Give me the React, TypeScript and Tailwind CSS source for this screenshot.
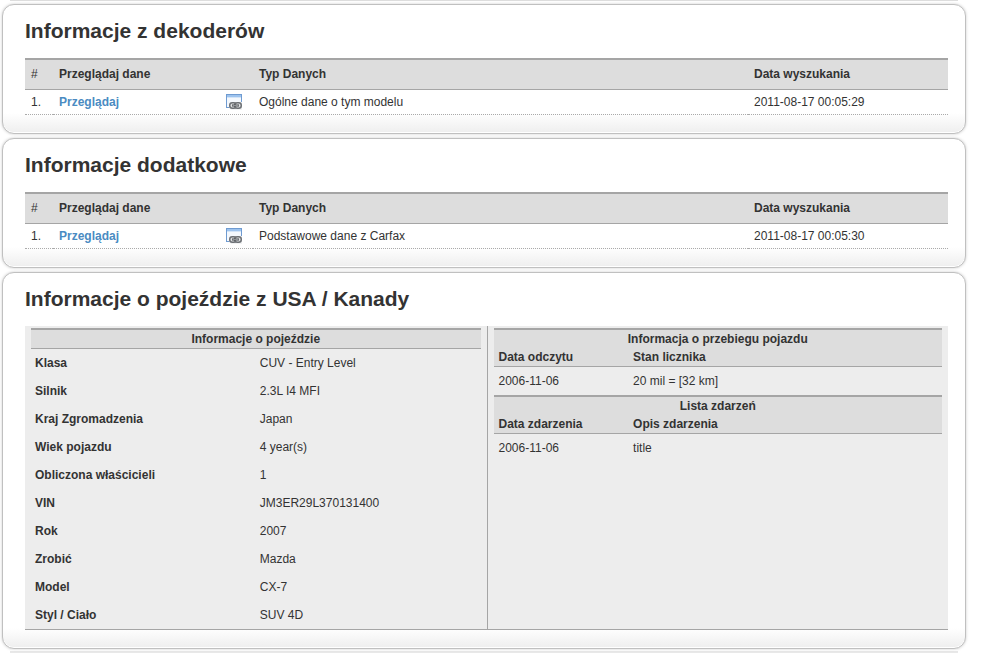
import type { ReactNode } from "react";

const decoderRows = [
  { type: "Ogólne dane o tym modelu", date: "2011-08-17 00:05:29" },
];

const extraRows = [
  { type: "Podstawowe dane z Carfax", date: "2011-08-17 00:05:30" },
];

const vehicle = [
  ["Klasa", "CUV - Entry Level"],
  ["Silnik", "2.3L I4 MFI"],
  ["Kraj Zgromadzenia", "Japan"],
  ["Wiek pojazdu", "4 year(s)"],
  ["Obliczona właścicieli", "1"],
  ["VIN", "JM3ER29L370131400"],
  ["Rok", "2007"],
  ["Zrobić", "Mazda"],
  ["Model", "CX-7"],
  ["Styl / Ciało", "SUV 4D"],
];

function WindowLinkIcon() {
  return (
    <svg width="16" height="16" viewBox="0 0 16 16" fill="none" aria-hidden="true">
      <rect x="0.5" y="0.5" width="15" height="13" fill="#f4f8fd" stroke="#6f9bd1" />
      <path d="M1 1h14v2H1z" fill="#9dc3ee" />
      <path d="M1 3.5h14" stroke="#d3e4f7" />
      <path d="M5 8h11v8H5L3 13v-3z" fill="#f1f2f3" />
      <rect x="3.75" y="8.75" width="6.5" height="5.5" rx="2.5" fill="#dcdee0" stroke="#6d7175" strokeWidth="1.5" />
      <rect x="8.75" y="8.75" width="6.5" height="5.5" rx="2.5" fill="#dcdee0" stroke="#6d7175" strokeWidth="1.5" />
      <path d="M6 11.5h7" stroke="#45494d" strokeWidth="2" />
      <path d="M6.5 11.5h6" stroke="#a9adb1" strokeWidth="0.75" />
    </svg>
  );
}

function Card({ title, children }: { title: string; children: ReactNode }) {
  return (
    <section className="rounded-xl border border-[#c0c0c0] bg-white bg-[linear-gradient(to_top,#eeeeee,#ffffff_20px)] pr-[17px] pb-[18px] pl-[22px] shadow-[inset_0_-1px_0_#ffffff,0_0_3px_#cccccc]">
      <h2 className="pt-3.5 pb-[15px] text-[21px] leading-6 font-bold">{title}</h2>
      {children}
    </section>
  );
}

function ReportTable({ rows }: { rows: { type: string; date: string }[] }) {
  const head = "border-t-2 border-b border-[#a5a5a5] bg-[#dddddd] px-1.5 pt-1 pb-[5px] text-left";
  const cell = "border-b border-dotted border-[#aaaaaa] px-1.5 py-0.5";
  return (
    <table className="w-full table-fixed border-separate border-spacing-0">
      <colgroup>
        <col className="w-7" />
        <col className="w-[200px]" />
        <col />
        <col className="w-[200px]" />
      </colgroup>
      <thead>
        <tr>
          <th className={`${head} font-normal`}>#</th>
          <th className={head}>Przeglądaj dane</th>
          <th className={head}>Typ Danych</th>
          <th className={head}>Data wyszukania</th>
        </tr>
      </thead>
      <tbody>
        {rows.map((row, index) => (
          <tr key={row.date}>
            <td className={cell}>{index + 1}.</td>
            <td className={cell}>
              <a href="#" className="flex items-center justify-between pr-[5px] font-bold text-[#4a8bc2]">
                Przeglądaj
                <WindowLinkIcon />
              </a>
            </td>
            <td className={cell}>{row.type}</td>
            <td className={cell}>{row.date}</td>
          </tr>
        ))}
      </tbody>
    </table>
  );
}

function EventTable({ title, columns, row }: { title: string; columns: string[]; row: string[] }) {
  return (
    <table className="w-full table-fixed border-separate border-spacing-0">
      <colgroup>
        <col className="w-[30%]" />
        <col />
      </colgroup>
      <thead className="bg-[#dddddd] leading-[18px]">
        <tr>
          <th colSpan={2} className="border-t-2 border-[#a5a5a5] px-1">{title}</th>
        </tr>
        <tr>
          {columns.map((column) => (
            <th key={column} className="border-b border-[#a5a5a5] px-[5px] text-left">{column}</th>
          ))}
        </tr>
      </thead>
      <tbody>
        <tr>
          {row.map((value) => (
            <td key={value} className="px-[5px] py-1">{value}</td>
          ))}
        </tr>
      </tbody>
    </table>
  );
}

export default function App() {
  return (
    <main className="bg-white pr-[15px] pl-0.5 font-['Liberation_Sans',Arial,sans-serif] text-xs leading-5 text-[#333333]">
      <div className="mx-2 h-px bg-[#dddddd]" />
      <div className="flex flex-col gap-1 pt-[3px]">
        <Card title="Informacje z dekoderów">
          <ReportTable rows={decoderRows} />
        </Card>
        <Card title="Informacje dodatkowe">
          <ReportTable rows={extraRows} />
        </Card>
        <Card title="Informacje o pojeździe z USA / Kanady">
          <div className="grid grid-cols-2 border-b border-[#a5a5a5] bg-[#ededed]">
            <div className="px-1.5 pt-0.5">
              <table className="w-full table-fixed border-separate border-spacing-0">
                <thead>
                  <tr>
                    <th colSpan={2} className="border-t-2 border-b border-[#a5a5a5] bg-[#dddddd] leading-[18px]">
                      Informacje o pojeździe
                    </th>
                  </tr>
                </thead>
                <tbody>
                  {vehicle.map(([label, value]) => (
                    <tr key={label}>
                      <th scope="row" className="px-1 py-1 text-left">{label}</th>
                      <td className="px-1 py-1">{value}</td>
                    </tr>
                  ))}
                </tbody>
              </table>
            </div>
            <div className="border-l border-[#a5a5a5] px-1.5 pt-0.5">
              <EventTable
                title="Informacja o przebiegu pojazdu"
                columns={["Data odczytu", "Stan licznika"]}
                row={["2006-11-06", "20 mil = [32 km]"]}
              />
              <EventTable
                title="Lista zdarzeń"
                columns={["Data zdarzenia", "Opis zdarzenia"]}
                row={["2006-11-06", "title"]}
              />
            </div>
          </div>
        </Card>
      </div>
      <div className="mx-2 mt-0.5 h-0.5 bg-[#e8e8e8]" />
    </main>
  );
}
